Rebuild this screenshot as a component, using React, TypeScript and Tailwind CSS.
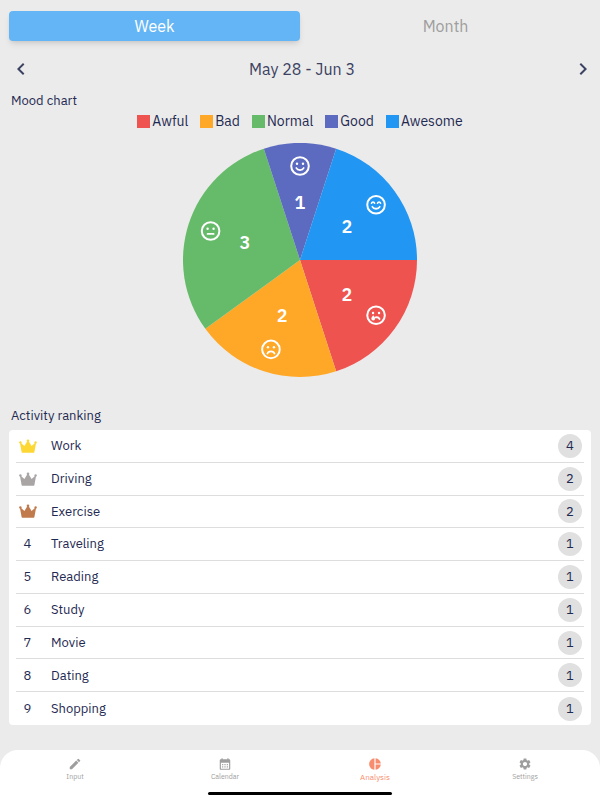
import type { ReactNode } from 'react';
import clsx from 'clsx';
import { MdCalendarMonth, MdChevronLeft, MdChevronRight, MdEdit, MdPieChart, MdSettings } from 'react-icons/md';

type Mood = 'Awful' | 'Bad' | 'Normal' | 'Good' | 'Awesome';

const moods: { name: Mood; count: number; color: string }[] = [
  { name: 'Awful', count: 2, color: '#ef5350' },
  { name: 'Bad', count: 2, color: '#ffa726' },
  { name: 'Normal', count: 3, color: '#66bb6a' },
  { name: 'Good', count: 1, color: '#5c6bc0' },
  { name: 'Awesome', count: 2, color: '#2196f3' },
];

const activities = [
  { name: 'Work', count: 4 },
  { name: 'Driving', count: 2 },
  { name: 'Exercise', count: 2 },
  { name: 'Traveling', count: 1 },
  { name: 'Reading', count: 1 },
  { name: 'Study', count: 1 },
  { name: 'Movie', count: 1 },
  { name: 'Dating', count: 1 },
  { name: 'Shopping', count: 1 },
];

const crownColors = ['text-[#fdd835]', 'text-[#a9a5a5]', 'text-[#c07a4c]'];

const dotEyes = (
  <>
    <circle cx="9" cy="9.8" r="1.2" fill="white" stroke="none" />
    <circle cx="15" cy="9.8" r="1.2" fill="white" stroke="none" />
  </>
);

// Faces are drawn in a 24x24 box centred on 12,12
const faces: Record<Mood, ReactNode> = {
  Awful: (
    <>
      {dotEyes}
      <path d="M11.5 14.2c1.7-.5 3.3.2 4 1.5" />
      <path d="M9.2 12c1.1 1.3 1.9 2.4 1.9 3.3a1.9 1.9 0 0 1-3.8 0c0-.9.8-2 1.9-3.3z" fill="white" stroke="none" />
    </>
  ),
  Bad: (
    <>
      {dotEyes}
      <path d="M8.5 16.1c1-2.8 6-2.8 7 0" />
    </>
  ),
  Normal: (
    <>
      {dotEyes}
      <path d="M9 15h6" />
    </>
  ),
  Good: (
    <>
      {dotEyes}
      <path d="M8.3 14c1.2 2.7 6.2 2.7 7.4 0" />
    </>
  ),
  Awesome: (
    <>
      <path d="M7.5 10.4c.5-1.6 2.5-1.6 3 0M13.5 10.4c.5-1.6 2.5-1.6 3 0" strokeWidth="1.6" />
      <path d="M8.3 14c1.2 2.7 6.2 2.7 7.4 0" />
    </>
  ),
};

const RADIUS = 117;

const pointAt = (angle: number, radius: number) => ({
  x: Math.cos(angle) * radius,
  y: Math.sin(angle) * radius,
});

const MoodPie = () => {
  const total = moods.reduce((sum, mood) => sum + mood.count, 0);
  let end = 0;

  return (
    <svg viewBox="-117 -117 234 234" className="mx-auto w-[234px]" role="img" aria-label="Mood chart">
      {moods.map((mood) => {
        const start = end;
        end = start + (mood.count / total) * Math.PI * 2;
        const middle = (start + end) / 2;
        const a = pointAt(start, RADIUS);
        const b = pointAt(end, RADIUS);
        const label = pointAt(middle, 58);
        const face = pointAt(middle, 94);
        return (
          <g key={mood.name}>
            <path d={`M0 0L${a.x} ${a.y}A${RADIUS} ${RADIUS} 0 0 1 ${b.x} ${b.y}Z`} fill={mood.color} />
            <text x={label.x} y={label.y + 7} textAnchor="middle" fill="white" className="text-[18px] font-semibold">
              {mood.count}
            </text>
            <g
              transform={`translate(${face.x - 12} ${face.y - 12})`}
              fill="none"
              stroke="white"
              strokeWidth="1.8"
              strokeLinecap="round"
            >
              <circle cx="12" cy="12" r="8.8" strokeWidth="2" />
              {faces[mood.name]}
            </g>
          </g>
        );
      })}
    </svg>
  );
};

const Crown = ({ className }: { className: string }) => (
  <svg viewBox="0 0 18 14" className={clsx('h-[14px] w-[18px]', className)} fill="currentColor" aria-hidden="true">
    <path d="M3.2 13.7Q2.7 13.7 2.6 13L1 4.3 1.7 3.700 5.4 6.9 8.500 2h1l3.100 4.900 3.700-3.200.7.6L15.400 13q-.1.7-.6.7z" />
    <circle cx="9" cy="1.7" r="1.3" />
    <circle cx="1.4" cy="3.5" r="1.2" />
    <circle cx="16.6" cy="3.5" r="1.2" />
  </svg>
);

const navItems = [
  { label: 'Input', icon: MdEdit },
  { label: 'Calendar', icon: MdCalendarMonth },
  { label: 'Analysis', icon: MdPieChart, active: true },
  { label: 'Settings', icon: MdSettings },
];

const App = () => {
  return (
    <div className="flex min-h-screen flex-col bg-[#ebebeb] font-['IBM_Plex_Sans',Roboto,sans-serif] text-[#1f2a52]">
      <main className="flex flex-1 flex-col px-[9px] pt-[11px] pb-[25px]">
        <div className="grid grid-cols-2">
          <button className="h-[30px] rounded bg-[#64b5f6] text-base text-white shadow-md">Week</button>
          <button className="h-[30px] text-base text-[#9e9e9e]">Month</button>
        </div>

        {/* Period switcher */}
        <div className="mt-4 flex h-6 items-center justify-between text-[#3b4262]">
          <button aria-label="Previous week">
            <MdChevronLeft className="size-6" />
          </button>
          <h1 className="text-base">May 28 - Jun 3</h1>
          <button aria-label="Next week" className="-mr-1">
            <MdChevronRight className="size-6" />
          </button>
        </div>

        <h2 className="mt-2 px-0.5 text-[13px] leading-6">Mood chart</h2>
        <ul className="flex h-4 items-center justify-center gap-3 text-sm">
          {moods.map((mood) => (
            <li key={mood.name} className="flex items-center gap-0.5">
              <span className="size-[13px]" style={{ backgroundColor: mood.color }} />
              {mood.name}
            </li>
          ))}
        </ul>
        <div className="mt-[14px]">
          <MoodPie />
        </div>

        <h2 className="mt-[27px] px-0.5 text-[13px] leading-6">Activity ranking</h2>
        <ol className="mt-0.5 grid flex-1 auto-rows-fr rounded bg-white px-[7px]">
          {activities.map((activity, index) => (
            <li
              key={activity.name}
              className="flex items-center border-b border-[#dddddd] pr-0.5 text-[13px] last:border-b-0"
            >
              <span className="flex w-[23px] justify-center">
                {index < 3 ? <Crown className={crownColors[index]} /> : index + 1}
              </span>
              <span className="ml-3 flex-1">{activity.name}</span>
              <span className="flex size-6 items-center justify-center rounded-full bg-[#e0e0e0]">
                {activity.count}
              </span>
            </li>
          ))}
        </ol>
      </main>

      <nav className="rounded-t-[18px] bg-white pt-[7px] pb-[5px]">
        <div className="grid grid-cols-4">
          {navItems.map(({ label, icon: Icon, active }) => (
            <button
              key={label}
              className={clsx(
                'flex h-[35px] flex-col items-center leading-3',
                active ? 'text-[8px] text-[#f88c6e]' : 'text-[7px] text-[#9e9e9e]'
              )}
            >
              <Icon className="size-[14px]" />
              {label}
            </button>
          ))}
        </div>
        <div className="mx-auto h-[3px] w-[184px] rounded-full bg-black" />
      </nav>
    </div>
  );
};

export default App;
